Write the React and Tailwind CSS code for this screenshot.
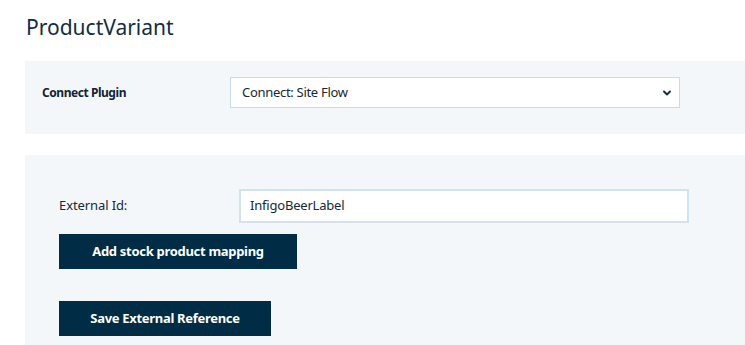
import { ChevronDown } from 'lucide-react';

const App = () => {
    return (
        <div className="min-h-screen bg-white pl-[25px] text-[#0e2a3f] font-['Noto_Sans',sans-serif] overflow-hidden">
            <h1 className="h-[61px] pt-[13px] text-[21px] leading-[28px] pl-px text-[#0f2d45]">ProductVariant</h1>

            <div className="bg-[#f4f7fa] pl-[17px] pt-[16px] pb-[26px] flex items-center">
                <label className="w-[188px] text-[12px] font-bold tracking-[-0.45px] text-[#0f2435]">Connect Plugin</label>
                <div className="relative w-[450px] h-[31px] bg-white border border-[#c8dcec] flex items-center pl-[11px]">
                    <span className="text-[13px] tracking-[-0.3px] text-[#13283a]">Connect: Site Flow</span>
                    <ChevronDown size={12} strokeWidth={4} className="absolute right-[6px] top-[9px] text-[#173247]" />
                </div>
            </div>

            <div className="mt-[21px] bg-[#f4f7fa] pl-[34px] pt-[34px] pb-[20px]">
                <div className="flex items-center">
                    <label className="w-[180px] text-[13px] tracking-[-0.1px] text-[#15293a]">External Id:</label>
                    <div className="w-[450px] h-[34px] bg-white border-2 border-[#d2e2ee] flex items-center pl-[9px]">
                        <span className="text-[13px] tracking-[-0.2px] text-[#15293a]">InfigoBeerLabel</span>
                    </div>
                </div>
                <button className="mt-[11px] w-[238px] h-[35px] bg-[#002c45] text-white text-[13px] font-bold tracking-[-0.3px]">
                    Add stock product mapping
                </button>
                <div>
                    <button className="mt-[32px] w-[212px] h-[35px] bg-[#002c45] text-white text-[13px] font-bold tracking-[-0.3px]">
                        Save External Reference
                    </button>
                </div>
            </div>
        </div>
    );
};

export default App;
